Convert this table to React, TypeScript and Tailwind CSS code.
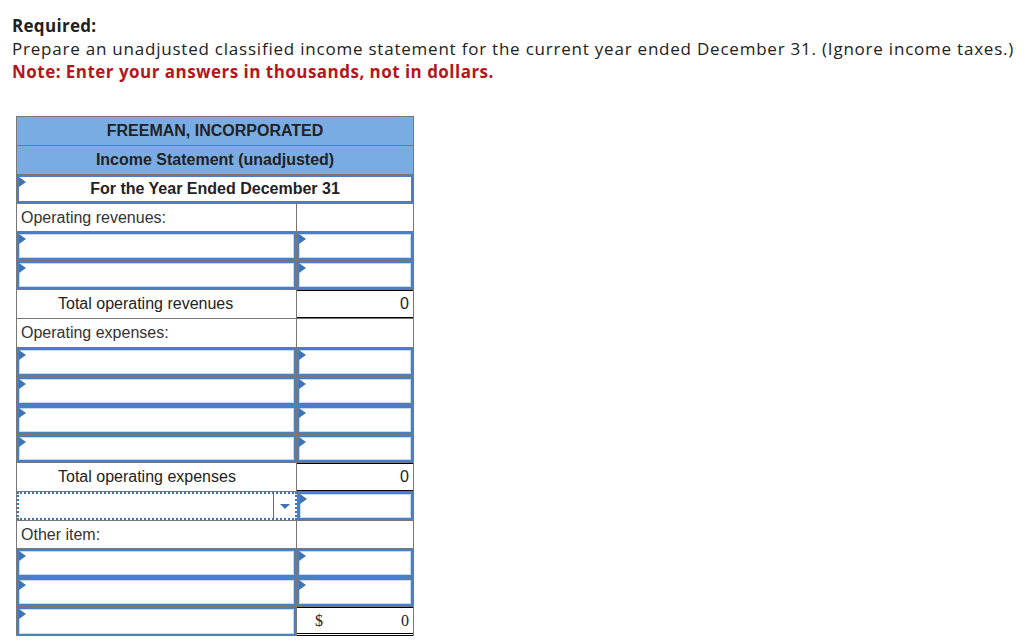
import React from "react";

const Flag = () => (
  <span className="absolute left-0 top-0 h-0 w-0 border-y-[5px] border-l-[7px] border-y-transparent border-l-[#3d73b9]" />
);

function InputCell({ className = "" }: { className?: string }) {
  return (
    <div className={`relative h-full border-2 border-[#4a7fc5] bg-white shadow-[inset_0_0_0_1px_#c6d9f1] ${className}`}>
      <Flag />
    </div>
  );
}

function LabelRow({ label, h = "h-[29px]" }: { label: string; h?: string }) {
  return (
    <div className={`flex ${h} border-b border-[#777]`}>
      <div className="flex w-[280px] items-center border-r border-[#777] pl-[4px] text-[16px] text-[#333]">{label}</div>
      <div className="flex-1" />
    </div>
  );
}

function InputRow({ h = "h-[29px]" }: { h?: string }) {
  return (
    <div className={`flex ${h} border-b border-[#777]`}>
      <div className="w-[280px] border-r border-[#777]">
        <InputCell />
      </div>
      <div className="flex-1">
        <InputCell />
      </div>
    </div>
  );
}

function TotalRow({ label }: { label: string }) {
  return (
    <div className="flex h-[29px] border-b border-[#777]">
      <div className="flex w-[280px] items-center border-r border-[#777] pl-[41px] text-[16px] text-[#222]">{label}</div>
      <div className="flex flex-1 items-center justify-end border-t border-b border-black pr-[4px] text-[16px] text-[#222]">0</div>
    </div>
  );
}

export default function App() {
  return (
    <div className="min-h-[642px] bg-white pl-[12px] pt-[14px]" style={{ fontFamily: "'Open Sans', Lato, sans-serif" }}>
      <div className="text-[17px] leading-[23px] text-[#212121]">
        <div className="font-bold tracking-[0.3px]">Required:</div>
        <div className="tracking-[0.78px]">
          Prepare an unadjusted classified income statement for the current year ended December 31. (Ignore income taxes.)
        </div>
        <div className="font-bold tracking-[0.47px] text-[#b5161b]">Note: Enter your answers in thousands, not in dollars.</div>
      </div>

      <div
        className="ml-[4px] mt-[33px] w-[398px] border-l border-t border-[#777]"
        style={{ fontFamily: "'Liberation Sans', Arial, sans-serif" }}
      >
        <div className="flex h-[29px] items-center justify-center border-b border-r border-[#777] bg-[#7aace4] text-[16px] font-bold text-[#222]">
          FREEMAN, INCORPORATED
        </div>
        <div className="flex h-[29px] items-center justify-center border-b border-r border-[#777] bg-[#7aace4] text-[16px] font-bold text-[#222]">
          Income Statement (unadjusted)
        </div>
        <div className="h-[29px] border-b border-r border-[#777]">
          <div className="relative flex h-full items-center justify-center border-2 border-[#4a7fc5] text-[16px] font-bold text-[#222]">
            <Flag />
            For the Year Ended December 31
          </div>
        </div>

        <div className="border-r border-[#777]">
          <LabelRow label="Operating revenues:" h="h-[28px]" />
          <InputRow />
          <InputRow />
          <TotalRow label="Total operating revenues" />
          <LabelRow label="Operating expenses:" />
          <InputRow />
          <InputRow />
          <InputRow />
          <InputRow h="h-[28px]" />
          <TotalRow label="Total operating expenses" />

          <div className="flex h-[29px] border-b border-[#777]">
            <div className="flex w-[280px] border-2 border-dotted border-[#3d73b9]">
              <div className="flex-1" />
              <div className="flex w-[22px] items-center justify-center border-l border-[#3d73b9]">
                <span className="h-0 w-0 border-x-[5px] border-t-[5px] border-x-transparent border-t-[#3d73b9]" />
              </div>
            </div>
            <div className="flex-1 border-l border-[#777]">
              <InputCell />
            </div>
          </div>

          <LabelRow label="Other item:" h="h-[28px]" />
          <InputRow />
          <InputRow />

          <div className="flex h-[29px]">
            <div className="w-[280px] border-r border-[#777]">
              <InputCell />
            </div>
            <div
              className="flex flex-1 items-center justify-between border-t border-b-[3px] border-double border-black px-[4px] pl-[18px] text-[16px] text-[#222]"
              style={{ fontFamily: "'Liberation Serif', 'Times New Roman', serif" }}
            >
              <span>$</span>
              <span>0</span>
            </div>
          </div>
        </div>
      </div>
    </div>
  );
}
